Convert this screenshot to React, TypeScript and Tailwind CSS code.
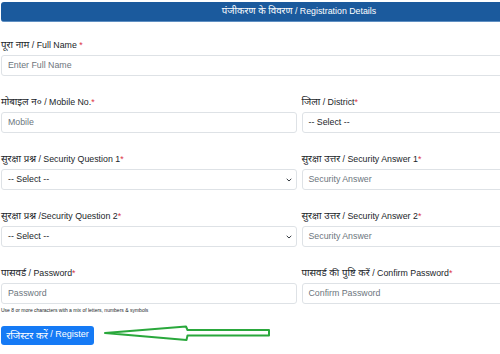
import React from "react";

const font = { fontFamily: '"Liberation Sans", Arial, "Noto Sans", sans-serif' };

function Hi({ children, size = "text-[9.7px]" }: { children: React.ReactNode; size?: string }) {
  return <span className={size}>{children}</span>;
}

function LabelRaw({ hi, rest }: { hi: string; rest: string }) {
  return (
    <div className="h-[13px] leading-[13px] text-[8.8px] text-[#212529] mb-[4px] whitespace-nowrap">
      <Hi>{hi}</Hi>
      {rest}
      <span className="text-[#dc3545]">*</span>
    </div>
  );
}

function Input({ placeholder }: { placeholder: string }) {
  return (
    <div className="h-[21px] border border-[#dee2e6] rounded-[3px] bg-white flex items-center pl-[6px] text-[8.8px] text-[#6c757d]">
      {placeholder}
    </div>
  );
}

function Select({ chevron }: { chevron?: boolean }) {
  return (
    <div className="h-[21px] border border-[#dee2e6] rounded-[3px] bg-white flex items-center justify-between pl-[6px] pr-[4px] text-[8.8px] text-[#212529]">
      <span>-- Select --</span>
      {chevron ? (
        <svg width="6" height="4" viewBox="0 0 6 4">
          <path d="M0.7 0.8 L3 3 L5.3 0.8" fill="none" stroke="#343a40" strokeWidth="1" />
        </svg>
      ) : null}
    </div>
  );
}

export default function App() {
  return (
    <div className="w-[500px] h-[354px] overflow-hidden bg-white" style={font}>
      <div className="w-[597px] pl-[1px] pt-[2px]">
        <div className="h-[20px] rounded-[3px] bg-[#1b5a9d] border-b border-[#5f8fc2] flex items-center justify-center text-white text-[8.8px] whitespace-nowrap">
          <Hi>पंजीकरण के विवरण</Hi>&nbsp;/ Registration Details
        </div>

        <div className="mt-[16px] flex flex-col gap-[19px]">
          <div>
            <LabelRaw hi="पूरा नाम" rest=" / Full Name " />
            <Input placeholder="Enter Full Name" />
          </div>

          <div className="grid grid-cols-2 gap-[5px]">
            <div>
              <LabelRaw hi="मोबाइल न०" rest=" / Mobile No." />
              <Input placeholder="Mobile" />
            </div>
            <div>
              <LabelRaw hi="जिला" rest=" / District" />
              <Select />
            </div>
          </div>

          <div className="grid grid-cols-2 gap-[5px]">
            <div>
              <LabelRaw hi="सुरक्षा प्रश्न" rest=" / Security Question 1" />
              <Select chevron />
            </div>
            <div>
              <LabelRaw hi="सुरक्षा उत्तर" rest=" / Security Answer 1" />
              <Input placeholder="Security Answer" />
            </div>
          </div>

          <div className="grid grid-cols-2 gap-[5px]">
            <div>
              <LabelRaw hi="सुरक्षा प्रश्न" rest=" /Security Question 2" />
              <Select chevron />
            </div>
            <div>
              <LabelRaw hi="सुरक्षा उत्तर" rest=" / Security Answer 2" />
              <Input placeholder="Security Answer" />
            </div>
          </div>

          <div>
            <div className="grid grid-cols-2 gap-[5px]">
              <div>
                <LabelRaw hi="पासवर्ड" rest=" / Password" />
                <Input placeholder="Password" />
              </div>
              <div>
                <LabelRaw hi="पासवर्ड की पुष्टि करें" rest=" / Confirm Password" />
                <Input placeholder="Confirm Password" />
              </div>
            </div>
            <div className="mt-[3px] h-[7px] leading-[7px] text-[5px] text-[#212529] whitespace-nowrap">
              Use 8 or more characters with a mix of letters, numbers &amp; symbols
            </div>
            <div className="mt-[11px] flex items-center">
              <div className="w-[93px] h-[19px] rounded-[3px] bg-[#157af5] text-white text-[9px] flex items-center justify-center whitespace-nowrap">
                <Hi size="text-[10px]">रजिस्टर करें</Hi>&nbsp;/ Register
              </div>
              <svg width="180" height="20" viewBox="0 0 180 20" className="ml-[8px]">
                <path
                  d="M3 8 L84 1.5 L85.5 5 L167 5 L167 10.5 L85.5 10.5 L84.5 15 Z"
                  fill="none"
                  stroke="#2aa83c"
                  strokeWidth="2"
                  strokeLinejoin="round"
                />
              </svg>
            </div>
          </div>
        </div>
      </div>
    </div>
  );
}
